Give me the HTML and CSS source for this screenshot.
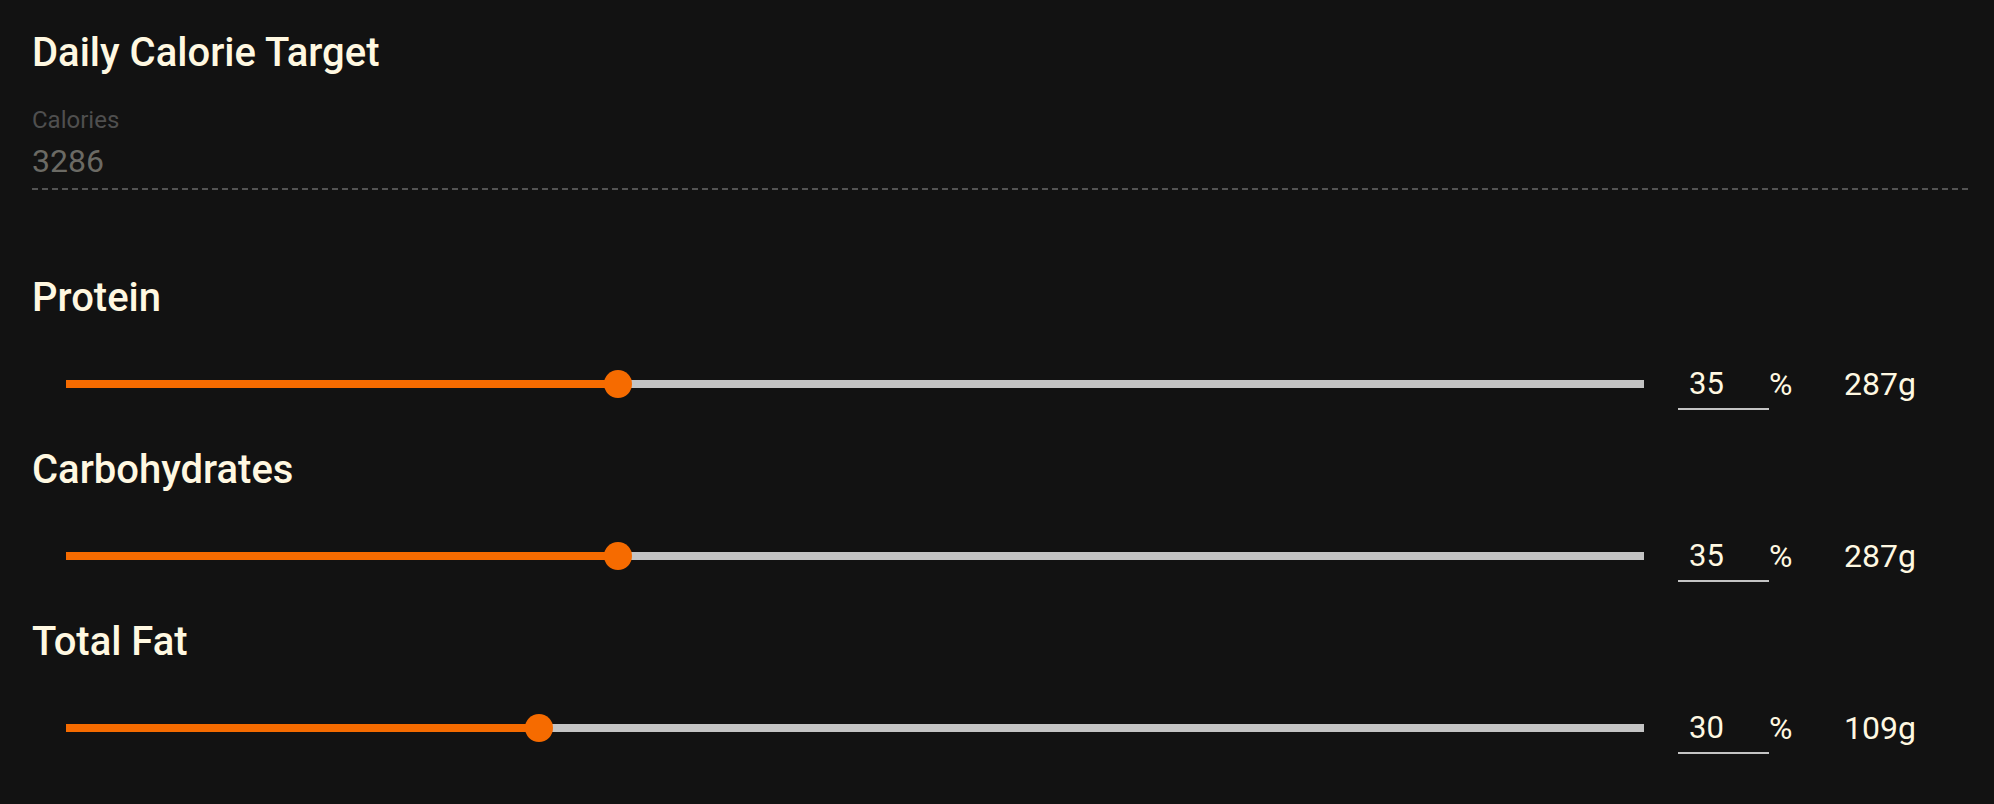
FILE: index.html
```html
<!DOCTYPE html>
<html lang="en">

<head>
    <meta charset="UTF-8">
    <meta name="viewport" content="width=device-width, initial-scale=1.0">
    <title>Macros</title>
    <link rel="stylesheet" href="styles.css">
</head>

<body>
    <div class="page">
        <h2 class="section-title">Daily Calorie Target</h2>
        <div class="calorie-field">
            <label class="field-label">Calories</label>
            <div class="field-value">3286</div>
        </div>

        <div class="macro">
            <h3 class="macro-title">Protein</h3>
            <div class="macro-row">
                <div class="slider">
                    <div class="slider-fill" style="width: 35%"></div>
                    <div class="slider-thumb" style="left: 35%"></div>
                </div>
                <input class="pct-input" type="text" value="35">
                <span class="pct-sign">%</span>
                <span class="grams">287g</span>
            </div>
        </div>

        <div class="macro">
            <h3 class="macro-title">Carbohydrates</h3>
            <div class="macro-row">
                <div class="slider">
                    <div class="slider-fill" style="width: 35%"></div>
                    <div class="slider-thumb" style="left: 35%"></div>
                </div>
                <input class="pct-input" type="text" value="35">
                <span class="pct-sign">%</span>
                <span class="grams">287g</span>
            </div>
        </div>

        <div class="macro">
            <h3 class="macro-title">Total Fat</h3>
            <div class="macro-row">
                <div class="slider">
                    <div class="slider-fill" style="width: 30%"></div>
                    <div class="slider-thumb" style="left: 30%"></div>
                </div>
                <input class="pct-input" type="text" value="30">
                <span class="pct-sign">%</span>
                <span class="grams">109g</span>
            </div>
        </div>
    </div>
</body>

</html>
```

FILE: styles.css
```css
html,
body {
    margin: 0;
    background: #121212;
}

body {
    font-family: Roboto, "Noto Sans", sans-serif;
    color: #fff8e1;
}

.page {
    padding: 29px 26px 0 32px;
}

.section-title,
.macro-title {
    margin: 0;
    font-size: 40px;
    font-weight: 500;
    line-height: 48px;
}

.calorie-field {
    margin-top: 27px;
    padding-bottom: 7px;
    /* disabled underline, dashed */
    background-image: linear-gradient(to right, #535353 6px, transparent 6px);
    background-size: 10px 2px;
    background-repeat: repeat-x;
    background-position: left bottom;
    height: 86px;
    box-sizing: border-box;
}

.field-label {
    display: block;
    font-size: 24px;
    line-height: 32px;
    color: #4f4f4f;
    margin-bottom: 5px;
}

.field-value {
    font-size: 32px;
    line-height: 40px;
    color: #6b6a64;
}

.macro {
    margin-top: 84px;
}

.macro + .macro {
    margin-top: 34px;
}

.macro-row {
    display: flex;
    align-items: center;
    height: 56px;
    margin-top: 34px;
}

.slider {
    position: relative;
    flex: 1;
    height: 8px;
    margin-left: 34px;
    background: #c4c4c4;
}

.slider-fill {
    height: 100%;
    background: #f66b00;
}

.slider-thumb {
    position: absolute;
    top: 50%;
    width: 28px;
    height: 28px;
    margin: -14px 0 0 -14px;
    border-radius: 50%;
    background: #f66b00;
}

.pct-input {
    align-self: flex-end;
    margin: 0 0 2px 34px;
    width: 91px;
    height: 50px;
    box-sizing: border-box;
    padding: 4px 0 6px 11px;
    border: none;
    border-bottom: 2px solid #c4c4c4;
    background: transparent;
    color: #fff8e1;
    font-family: inherit;
    font-size: 31px;
    line-height: 38px;
    outline: none;
}

.pct-sign {
    width: 75px;
    font-size: 32px;
    line-height: 40px;
}

.grams {
    width: 124px;
    font-size: 32px;
    line-height: 40px;
}
```
